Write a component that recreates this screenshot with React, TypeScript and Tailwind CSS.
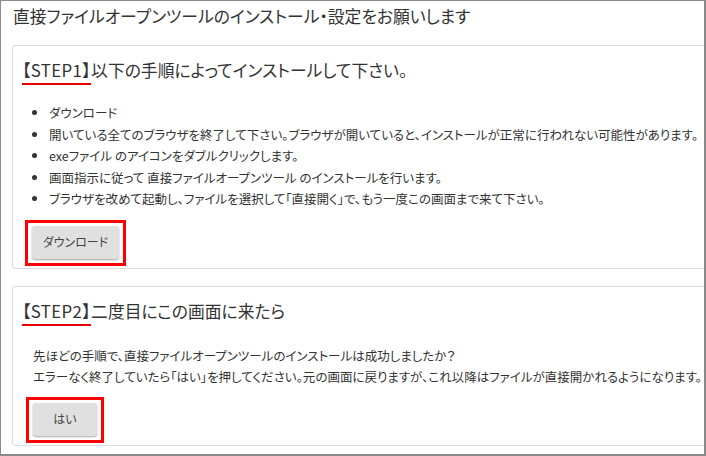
import React from "react";

function StepHeading({ step, title }: { step: string; title: string }) {
  return (
    <h2 className="pt-[13px] text-[16.8px] leading-[22px] flex whitespace-nowrap">
      <span className="pb-[2px] border-b-2 border-[#e60000] tracking-[0.4px]">【{step}】</span>
      <span>{title}</span>
    </h2>
  );
}

function MarkedButton({ label, width }: { label: string; width: string }) {
  return (
    <div className="inline-block border-[3px] border-[#ff0000] pt-[3px] pb-[4px] px-[4px]">
      <button
        className={`${width} h-[33px] rounded-[3px] bg-[#e0e0e0] text-[12px] text-[#444] shadow-[0_1px_2px_rgba(0,0,0,0.35)]`}
      >
        {label}
      </button>
    </div>
  );
}

const steps = [
  "ダウンロード",
  "開いている全てのブラウザを終了して下さい。ブラウザが開いていると、インストールが正常に行われない可能性があります。",
  "exeファイル のアイコンをダブルクリックします。",
  "画面指示に従って 直接ファイルオープンツール のインストールを行います。",
  "ブラウザを改めて起動し、ファイルを選択して「直接開く」で、もう一度この画面まで来て下さい。",
];

export default function App() {
  return (
    <div className="w-[706px] h-[456px] overflow-hidden bg-white border-[#8a8a8a] border-l border-t border-r-2 border-b-2 text-[#333] font-['Noto_Sans_CJK_JP',sans-serif] [font-feature-settings:'palt']">
      <h1 className="pl-3 pt-[3px] text-[16.8px] leading-6 whitespace-nowrap">
        直接ファイルオープンツールのインストール・設定をお願いします
      </h1>

      <section className="mt-[17px] ml-[11px] mr-[-30px] border border-[#dddddd] rounded-[3px] pl-[9px] pb-[2px]">
        <StepHeading step="STEP1" title="以下の手順によってインストールして下さい。" />
        <ul className="mt-[17px] list-disc pl-[27px] text-[12.5px] leading-[21.5px] whitespace-nowrap">
          {steps.map((s) => (
            <li key={s}>{s}</li>
          ))}
        </ul>
        <div className="mt-[10px] ml-[3px]">
          <MarkedButton label="ダウンロード" width="w-[87px]" />
        </div>
      </section>

      <section className="mt-[17px] ml-[11px] mr-[-30px] border border-[#dddddd] rounded-[3px] pl-[9px] pb-[2px]">
        <StepHeading step="STEP2" title="二度目にこの画面に来たら" />
        <div className="mt-[19px] pl-[11px] text-[12.5px] leading-[21px] whitespace-nowrap">
          <p>先ほどの手順で、直接ファイルオープンツールのインストールは成功しましたか？</p>
          <p>エラーなく終了していたら「はい」を押してください。元の画面に戻りますが、これ以降はファイルが直接開かれるようになります。</p>
        </div>
        <div className="mt-[10px] ml-[4px]">
          <MarkedButton label="はい" width="w-[64px]" />
        </div>
      </section>
    </div>
  );
}
